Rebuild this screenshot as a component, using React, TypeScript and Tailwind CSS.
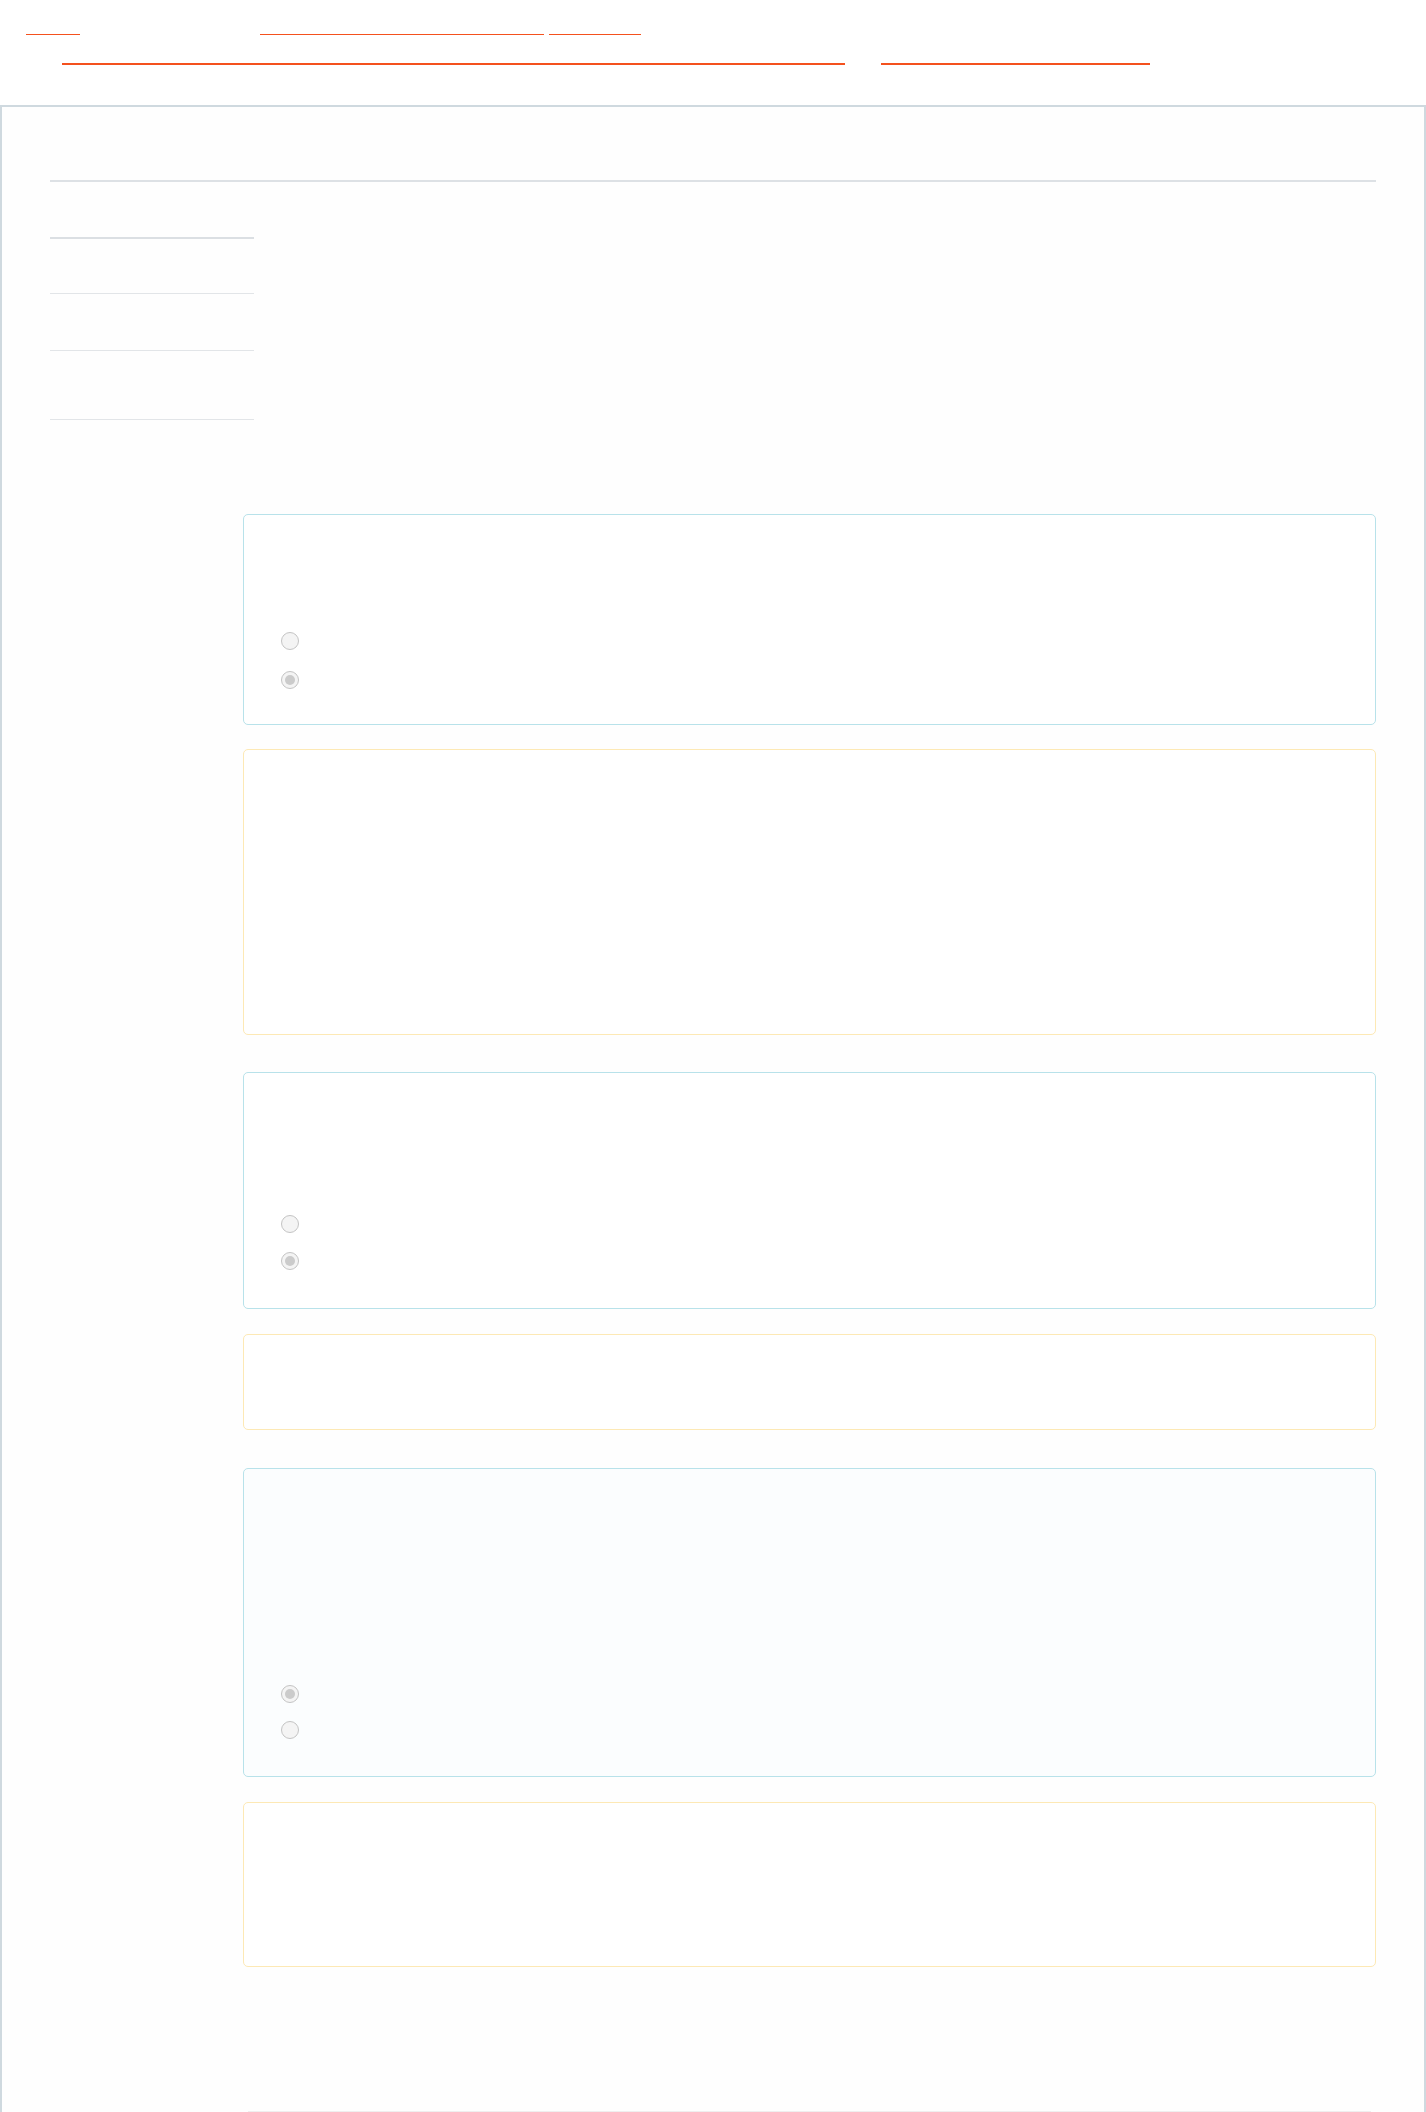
function Radio({ checked }: { checked?: boolean }) {
  return (
    <span
      role="radio"
      aria-checked={checked ? "true" : "false"}
      className="w-[18px] h-[18px] rounded-full border border-[#c4c4c4] bg-[#f4f4f4] flex items-center justify-center"
    >
      {checked && <span className="w-[10px] h-[10px] rounded-full bg-[#cbcbcb]" />}
    </span>
  );
}

export default function App() {
  return (
    <div className="min-h-screen bg-white font-['Liberation_Sans',sans-serif]">
      <header className="pt-[34px] pb-[40px]">
        <div className="flex">
          <a className="ml-[26px] w-[54px] h-px bg-[#f4511e]" href="#" aria-label="home" />
          <a className="ml-[180px] w-[284px] h-px bg-[#f4511e]" href="#" aria-label="course" />
          <a className="ml-[5px] w-[92px] h-px bg-[#f4511e]" href="#" aria-label="unit" />
        </div>
        <div className="flex mt-[28px]">
          <a className="ml-[62px] w-[783px] h-[2px] bg-[#f4511e]" href="#" aria-label="title" />
          <a className="ml-[36px] w-[269px] h-[2px] bg-[#f4511e]" href="#" aria-label="next" />
        </div>
      </header>

      <main className="border-2 border-[#cfd9df] bg-[#fefefe] px-[48px]">
        <div className="h-[75px] border-b-2 border-[#dde1e5]" />

        <nav className="mt-[55px] w-[204px]">
          <div className="h-[57px] border-t-2 border-b border-t-[#dbdfe3] border-b-[#e2e5e8]" />
          <div className="h-[57px] border-b border-[#e2e5e8]" />
          <div className="h-[69px] border-b border-[#e2e5e8]" />
        </nav>

        <section className="ml-[193px] mt-[94px]">
          <div className="h-[211px] rounded-[5px] border border-[#b8e2ea] bg-white pt-[106px] pl-[37px]">
            <div className="h-[39px] flex items-center">
              <Radio />
            </div>
            <div className="h-[39px] flex items-center">
              <Radio checked />
            </div>
          </div>
          <div className="mt-[24px] h-[286px] rounded-[5px] border border-[#fde9b5] bg-white" />

          <div className="mt-[37px] h-[237px] rounded-[5px] border border-[#b8e2ea] bg-white pt-[132px] pl-[37px]">
            <div className="h-[37px] flex items-center">
              <Radio />
            </div>
            <div className="h-[37px] flex items-center">
              <Radio checked />
            </div>
          </div>
          <div className="mt-[25px] h-[96px] rounded-[5px] border border-[#fde9b5] bg-white" />

          <div className="mt-[38px] h-[309px] rounded-[5px] border border-[#b8e2ea] bg-[#fbfdfe] pt-[207px] pl-[37px]">
            <div className="h-[36px] flex items-center">
              <Radio checked />
            </div>
            <div className="h-[36px] flex items-center">
              <Radio />
            </div>
          </div>
          <div className="mt-[25px] h-[165px] rounded-[5px] border border-[#fde9b5] bg-white" />

          <div className="mt-[144px] mx-[5px] h-[200px] border-t border-[#efefef]" />
        </section>
      </main>
    </div>
  );
}
